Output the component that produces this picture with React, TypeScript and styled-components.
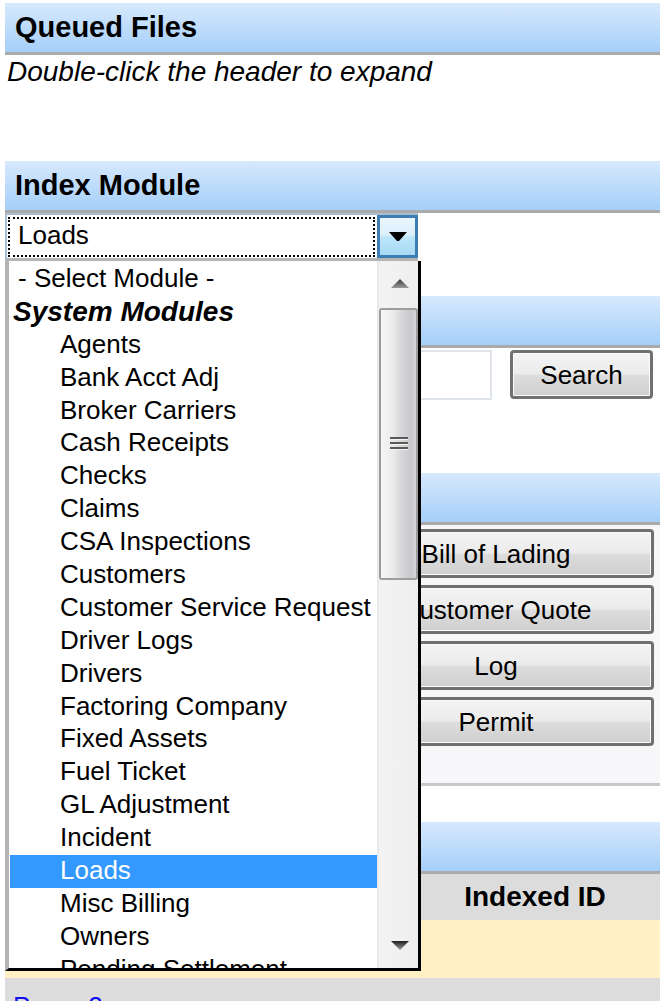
import styled, { createGlobalStyle } from "styled-components";

const GlobalStyle = createGlobalStyle`
  * {
    box-sizing: border-box;
  }

  body {
    margin: 0;
    background: #fff;
    font-family: "Liberation Sans", Arial, sans-serif;
    color: #000;
  }

  #root {
    padding: 3px 0 0 5px;
  }
`;

const Header = styled.div`
  display: flex;
  align-items: center;
  height: 52px;
  padding-left: 10px;
  background: linear-gradient(#d7e9fd, #a5cff9);
  border-bottom: 3px solid #aaaaaa;
  font-size: 29px;
  font-weight: bold;
  line-height: 1;
  user-select: none;
`;

const Body = styled.div<{ $height: number }>`
  height: ${(p) => p.$height}px;
`;

const Hint = styled.p`
  margin: 0;
  padding: 1px 0 0 2px;
  font-size: 28px;
  font-style: italic;
  line-height: 32px;
`;

const SelectWrap = styled.div`
  position: relative;
  width: 413px;
`;

const SelectBox = styled.div`
  display: flex;
  height: 48px;
  border-top: 2px solid #a9bdd1;
  border-left: 2px solid #a9bdd1;
  border-bottom: 3px solid #b4b4b4;
`;

const FocusRect = styled.div`
  display: flex;
  align-items: center;
  width: 367px;
  margin: 2px 2px 1px 1px;
  padding: 0 0 4px 8px;
  border: 2px dotted #000;
  font-size: 26px;
  line-height: 1;
`;

const DropButton = styled.div`
  display: flex;
  align-items: center;
  justify-content: center;
  width: 41px;
  border: 3px solid #3d7db3;
  background: linear-gradient(#eaf6fd 0%, #dcf0fc 45%, #bde5fa 52%, #a7d9f5 100%);
`;

const Dropdown = styled.div`
  position: absolute;
  top: 100%;
  left: 0;
  z-index: 10;
  display: flex;
  width: 416px;
  height: 710px;
  background: #fff;
  border-left: 4px solid #b4b4b4;
  border-right: 3px solid #000;
  border-bottom: 3px solid #000;
`;

const List = styled.div`
  flex: 1;
  padding-top: 2px;
  overflow: hidden;
`;

type OptionKind = "plain" | "group" | "child";

const Option = styled.div<{ $kind: OptionKind; $selected?: boolean }>`
  height: 32.9px;
  margin-left: 1px;
  padding-left: ${(p) => (p.$kind === "child" ? 50 : p.$kind === "group" ? 3 : 8)}px;
  font-size: ${(p) => (p.$kind === "group" ? 28 : 26)}px;
  font-weight: ${(p) => (p.$kind === "group" ? "bold" : "normal")};
  font-style: ${(p) => (p.$kind === "group" ? "italic" : "normal")};
  line-height: 31px;
  white-space: nowrap;
  overflow: hidden;
  background: ${(p) => (p.$selected ? "#3399ff" : "transparent")};
  color: ${(p) => (p.$selected ? "#fff" : "#000")};
`;

const ScrollBar = styled.div`
  display: flex;
  flex-direction: column;
  width: 41px;
  background: linear-gradient(to right, #e4e4e4 0, #f3f3f3 3px, #eeeeee 100%);
`;

const ScrollArrow = styled.div`
  display: flex;
  align-items: center;
  justify-content: center;
  height: 45px;
  padding-left: 4px;
`;

const Track = styled.div`
  flex: 1;
`;

const Thumb = styled.div`
  display: flex;
  align-items: center;
  justify-content: center;
  height: 272px;
  margin: 2px 0 0 2px;
  border: 2px solid #9d9d9d;
  border-radius: 3px;
  background: linear-gradient(
    to right,
    #f6f6f6 0%,
    #ebebeb 35%,
    #d9d9dc 55%,
    #c8c8cd 85%,
    #d6d6d9 100%
  );
`;

const SearchRow = styled.div`
  display: flex;
  justify-content: flex-end;
  align-items: flex-start;
  height: 125px;
  padding: 2px 7px 0 0;
`;

const TextBox = styled.div`
  width: 290px;
  height: 50px;
  margin-right: 18px;
  background: #fff;
  border: 2px solid #dfe3ea;
`;

const Button = styled.div<{ $width: number }>`
  display: flex;
  align-items: center;
  justify-content: center;
  width: ${(p) => p.$width}px;
  height: 49px;
  border: 3px solid #707070;
  border-radius: 4px;
  background: linear-gradient(#f3f3f3 0%, #ececec 48%, #dddddd 52%, #cfcfcf 100%);
  box-shadow: inset 0 0 0 1px #fbfbfb;
  font-size: 26px;
  line-height: 1;
  white-space: nowrap;
`;

const ButtonsPanel = styled.div`
  display: flex;
  flex-direction: column;
  align-items: flex-end;
  gap: 7px;
  height: 261px;
  padding: 4px 6px 0 0;
  background: #f7f7fa;
  border-bottom: 3px solid #c8c8c8;
`;

const TableHead = styled.div`
  display: grid;
  grid-template-columns: 405px 1fr;
  align-items: center;
  height: 46px;
  background: #dcdcdc;
  font-size: 28px;
  font-weight: bold;
  line-height: 1;
`;

const HeadCell = styled.div`
  text-align: center;
`;

const Row = styled.div`
  height: 58px;
  background: #fff1c5;
`;

const Pager = styled.div`
  height: 23px;
  padding: 15px 0 0 8px;
  overflow: hidden;
  background: #dcdcdc;
  font-size: 26px;
  line-height: 26px;
`;

const PageLink = styled.a`
  color: #1010ee;
  text-decoration: underline;
`;

const options: { label: string; kind: OptionKind }[] = [
  { label: "- Select Module -", kind: "plain" },
  { label: "System Modules", kind: "group" },
  ...[
    "Agents",
    "Bank Acct Adj",
    "Broker Carriers",
    "Cash Receipts",
    "Checks",
    "Claims",
    "CSA Inspections",
    "Customers",
    "Customer Service Request",
    "Driver Logs",
    "Drivers",
    "Factoring Company",
    "Fixed Assets",
    "Fuel Ticket",
    "GL Adjustment",
    "Incident",
    "Loads",
    "Misc Billing",
    "Owners",
    "Pending Settlement",
  ].map((label) => ({ label, kind: "child" as OptionKind })),
];

const selected = "Loads";

const actions = ["Bill of Lading", "Customer Quote", "Log", "Permit"];

const ScrollGlyph = ({ down }: { down?: boolean }) => (
  <svg width="18" height="10" viewBox="0 0 18 10">
    <defs>
      <linearGradient id={down ? "gd" : "gu"} x1="0" y1="0" x2="0" y2="1">
        <stop offset="0" stopColor={down ? "#1e1e1e" : "#3a3a3a"} />
        <stop offset="1" stopColor="#9a9a9a" />
      </linearGradient>
    </defs>
    <polygon
      points={down ? "0,0 18,0 9,9" : "9,0 18,9 0,9"}
      fill={`url(#${down ? "gd" : "gu"})`}
    />
  </svg>
);

const App = () => {
  return (
    <>
      <GlobalStyle />

      <Header>Queued Files</Header>
      <Body $height={106}>
        <Hint>Double-click the header to expand</Hint>
      </Body>

      <Header>Index Module</Header>
      <Body $height={83}>
        <SelectWrap>
          <SelectBox>
            <FocusRect>Loads</FocusRect>
            <DropButton>
              <svg width="18" height="10" viewBox="0 0 18 10">
                <polygon points="0,0 18,0 10,9 8,9" fill="#000" />
              </svg>
            </DropButton>
          </SelectBox>

          <Dropdown>
            <List>
              {options.map((o) => (
                <Option key={o.label} $kind={o.kind} $selected={o.label === selected}>
                  {o.label}
                </Option>
              ))}
            </List>
            <ScrollBar>
              <ScrollArrow>
                <ScrollGlyph />
              </ScrollArrow>
              <Thumb>
                <svg width="18" height="16" viewBox="0 0 18 16">
                  {[1, 6, 11].map((y) => (
                    <g key={y}>
                      <rect x="0" y={y} width="18" height="2" fill="#5a5a5a" />
                      <rect x="0" y={y + 2} width="18" height="1" fill="#f4f4f4" />
                    </g>
                  ))}
                </svg>
              </Thumb>
              <Track />
              <ScrollArrow>
                <ScrollGlyph down />
              </ScrollArrow>
            </ScrollBar>
          </Dropdown>
        </SelectWrap>
      </Body>

      <Header>Search</Header>
      <SearchRow>
        <TextBox />
        <Button $width={143}>Search</Button>
      </SearchRow>

      <Header>Create</Header>
      <ButtonsPanel>
        {actions.map((a) => (
          <Button key={a} $width={316}>
            {a}
          </Button>
        ))}
      </ButtonsPanel>

      <Body $height={36} />

      <Header>Indexed Files</Header>
      <TableHead>
        <HeadCell />
        <HeadCell>Indexed ID</HeadCell>
      </TableHead>
      <Row />
      <Pager>
        <PageLink>Page</PageLink>: <PageLink>2</PageLink>
      </Pager>
    </>
  );
};

export default App;
